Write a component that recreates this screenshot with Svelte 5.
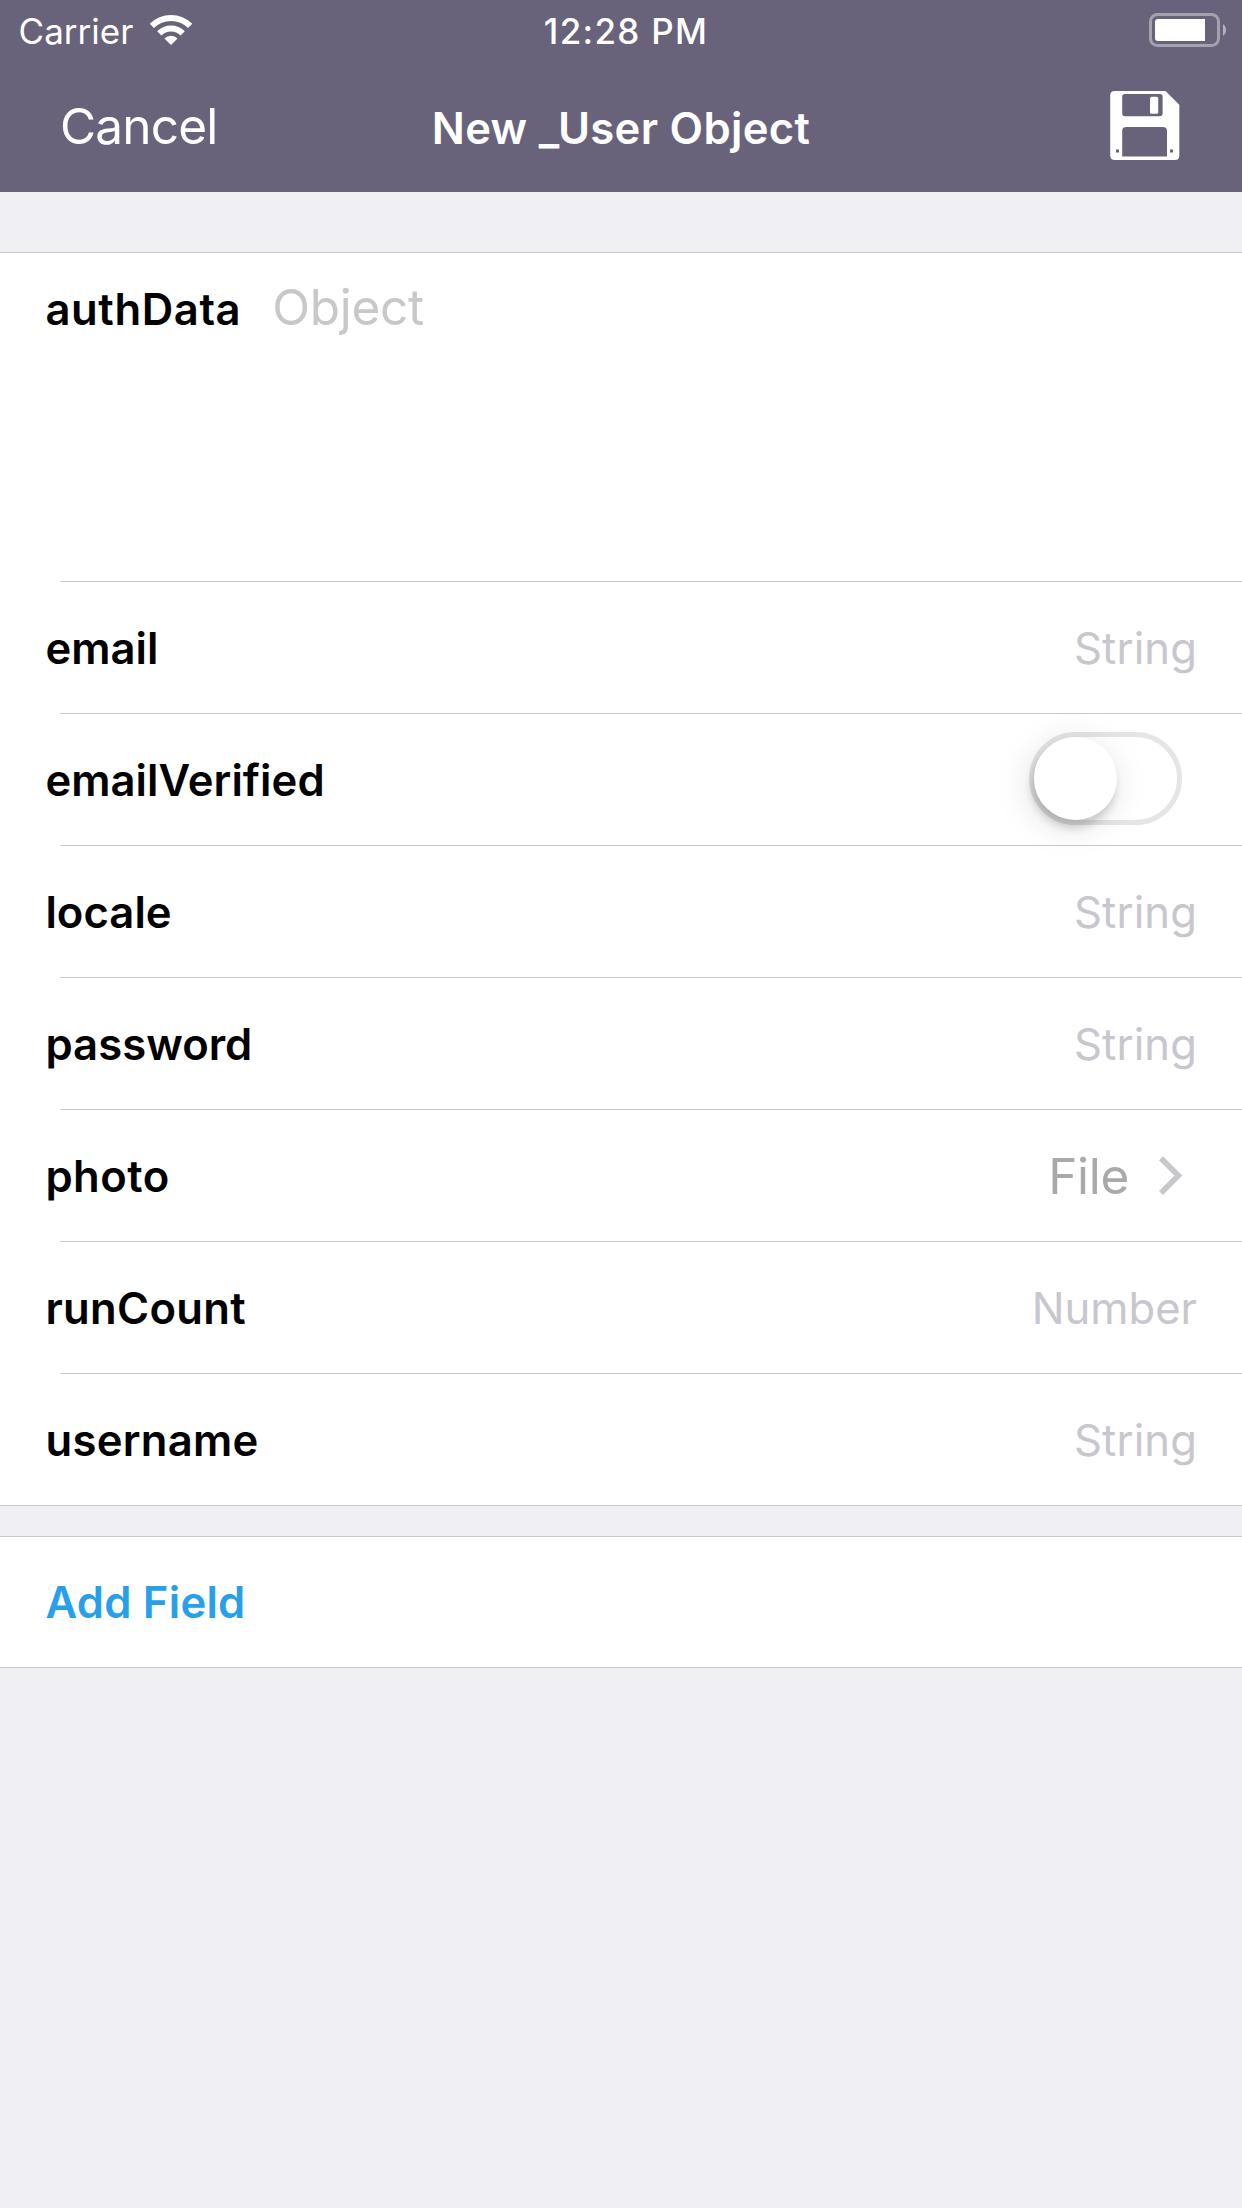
<script>
  const fields = [
    { name: 'email', kind: 'String' },
    { name: 'emailVerified', kind: 'Boolean' },
    { name: 'locale', kind: 'String' },
    { name: 'password', kind: 'String' },
    { name: 'photo', kind: 'File' },
    { name: 'runCount', kind: 'Number' },
    { name: 'username', kind: 'String' }
  ];
</script>

<div class="screen">
  <header>
    <div class="status">
      <div class="carrier">
        <span class="carrier-name">Carrier</span>
        <svg class="wifi" width="42" height="30" viewBox="-21 -30 42 30" fill="#fff" aria-hidden="true">
          <path d="M-21.2-21.2A30 30 0 0 1 21.2-21.2L17-17A24 24 0 0 0-17-17Z" />
          <path d="M-13.8-13.8A19.5 19.5 0 0 1 13.8-13.8L9.6-9.6A13.6 13.6 0 0 0-9.6-9.6Z" />
          <path d="M-6.6-6.6A9.4 9.4 0 0 1 6.6-6.6L0 0Z" />
        </svg>
      </div>
      <time>12:28 PM</time>
      <svg class="battery" width="78" height="34" viewBox="0 0 78 34" aria-hidden="true">
        <rect x="1.5" y="1.5" width="68" height="31" rx="7" fill="none" stroke="#a4a2b0" stroke-width="3" />
        <path d="M9 6H56V28H9A3 3 0 0 1 6 25V9A3 3 0 0 1 9 6Z" fill="#fff" />
        <path d="M74 11A7.4 7.4 0 0 1 74 23Z" fill="#b3b1bd" />
      </svg>
    </div>
    <nav>
      <button class="cancel">Cancel</button>
      <h1>New _User Object</h1>
      <button class="save" aria-label="Save">
        <svg width="70" height="70" viewBox="0 0 70 70" aria-hidden="true">
          <path
            fill="#fff"
            fill-rule="evenodd"
            d="M5 .9H55.5L69.3 14.7V65.4Q69.3 69.9 65 69.9H5Q.2 69.9 .2 65.4V5.2Q.2 .9 5 .9ZM15 3.9Q12.2 3.9 12.2 6.7V23.3Q12.2 26.2 15 26.2H50Q52.6 26.2 52.6 23.3V6.7Q52.6 3.9 50 3.9ZM16.5 37Q12.2 37 12.2 41V66.6H57V41Q57 37 52.7 37ZM6 59.5V62.5H9V59.5ZM60 59.5V62.5H63V59.5Z"
          />
          <rect x="40" y="6.8" width="8.2" height="17" rx="1.5" fill="#fff" />
        </svg>
      </button>
    </nav>
  </header>

  <main>
    <section class="group">
      <div class="row auth">
        <span class="label authData">authData</span>
        <span class="object">Object</span>
      </div>
      {#each fields as field}
        <div class="row">
          <span class="label {field.name}">{field.name}</span>
          {#if field.kind === 'Boolean'}
            <span class="switch" role="switch" aria-checked="false" aria-label={field.name} tabindex="0">
              <span class="thumb"></span>
            </span>
          {:else if field.kind === 'File'}
            <span class="file">
              <span class="file-text">File</span>
              <svg class="chevron" width="26" height="42" viewBox="0 0 26 42" fill="none" stroke="#c7c7cc" stroke-width="5.6" aria-hidden="true">
                <path d="M3 3.2L20.4 20.6L3 38" />
              </svg>
            </span>
          {:else}
            <span class="placeholder {field.kind}">{field.kind}</span>
          {/if}
        </div>
      {/each}
    </section>

    <section class="group">
      <div class="row action">
        <span class="label add">Add Field</span>
      </div>
    </section>
  </main>
</div>

<style>
  :global(body) {
    background: #efeff4;
  }

  .screen {
    width: 1242px;
    height: 2208px;
    overflow: hidden;
    box-sizing: border-box;
    background: #efeff4;
    font-family: Inter, 'Liberation Sans', sans-serif;
    font-size: 43.6px;
    line-height: 60px;
    white-space: nowrap;
  }

  header {
    height: 192px;
    background: #68637a;
    color: #fff;
  }

  .status {
    display: grid;
    grid-template-columns: 1fr auto 1fr;
    height: 60px;
    padding: 0 15px 0 18.6px;
    font-size: 35px;
    line-height: 62px;
  }

  .carrier {
    display: flex;
    align-items: flex-start;
    gap: 16.4px;
  }

  .wifi {
    margin-top: 15px;
  }

  time {
    padding-left: 6.5px;
    font-weight: 500;
    letter-spacing: 1.3px;
  }

  .battery {
    justify-self: end;
    margin-top: 13px;
  }

  nav {
    display: grid;
    grid-template-columns: 1fr auto 1fr;
    height: 132px;
    padding: 0 62px 0 60px;
  }

  button {
    margin: 0;
    padding: 0;
    border: 0;
    background: none;
    color: inherit;
    font: inherit;
  }

  .cancel {
    justify-self: start;
    align-self: start;
    padding-top: 36px;
    font-size: 49.5px;
    letter-spacing: -0.8px;
  }

  h1 {
    margin: 0;
    padding: 39px 0 0 2px;
    font-size: 43.6px;
    font-weight: 560;
    letter-spacing: 0.33px;
  }

  .save {
    display: flex;
    justify-self: end;
    align-self: start;
    margin-top: 30px;
  }

  main {
    display: flex;
    flex-direction: column;
    gap: 30px;
    padding-top: 60px;
  }

  .group {
    border-top: 1px solid #c8c7cc;
    background: #fff;
  }

  .row {
    display: flex;
    align-items: center;
    justify-content: space-between;
    height: 132px;
    box-sizing: border-box;
    padding: 2px 45px 0 45.4px;
    background: linear-gradient(#c8c7cc, #c8c7cc) 60px 100% / 100% 1px no-repeat;
  }

  .row:last-child {
    background-position: 0 100%;
  }

  .action {
    height: 131px;
    padding-top: 0;
  }

  .auth {
    justify-content: flex-start;
    align-items: flex-start;
    gap: 31px;
    height: 329px;
    padding-top: 26px;
  }

  .label {
    color: #000;
    font-weight: 570;
    letter-spacing: 0.3px;
  }

  .authData {
    padding-top: 1px;
    letter-spacing: 0.6px;
  }

  .email,
  .emailVerified,
  .locale,
  .password {
    letter-spacing: 0.05px;
  }

  .photo {
    letter-spacing: 0.5px;
  }

  .add {
    color: #279feb;
    letter-spacing: 0.25px;
  }

  .object {
    color: #c8c8c8;
    font-size: 49.5px;
    line-height: 56px;
    letter-spacing: -0.3px;
  }

  .placeholder {
    color: #c7c7cd;
    letter-spacing: 0.1px;
  }

  .Number {
    letter-spacing: 0;
  }

  .file {
    display: flex;
    align-items: center;
    gap: 29px;
    padding-right: 13px;
  }

  .file-text {
    padding-bottom: 2px;
    color: #a9a9a9;
    font-size: 49.5px;
    letter-spacing: -0.3px;
  }

  .chevron {
    margin-bottom: 3px;
  }

  .switch {
    display: block;
    width: 153px;
    height: 93px;
    box-sizing: border-box;
    margin: 0 15px 5px 0;
    border: 5px solid #e5e5e5;
    border-radius: 47px;
  }

  .thumb {
    display: block;
    width: 83px;
    height: 83px;
    border-radius: 50%;
    background: #fff;
    box-shadow:
      -2px 8px 9px rgba(0, 0, 0, 0.16),
      -4px 6px 36px rgba(0, 0, 0, 0.13);
  }
</style>
